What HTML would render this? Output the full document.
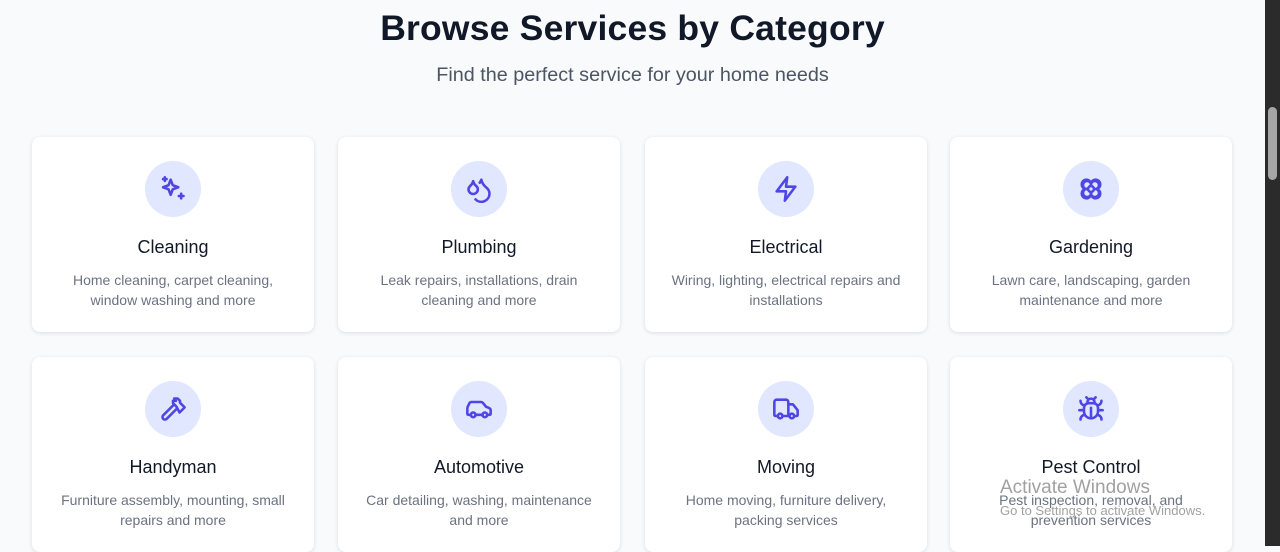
<!DOCTYPE html>
<html><head><meta charset="utf-8"><style>
*{box-sizing:border-box;margin:0;padding:0}
body{width:1280px;height:546px;overflow:hidden;background:#f8fafc;font-family:"Liberation Sans",sans-serif;position:relative}
h1{position:absolute;top:8px;left:0;width:1265px;text-align:center;font-size:35.5px;font-weight:bold;color:#111827;letter-spacing:0.2px}
.sub{position:absolute;top:64px;left:0;width:1265px;text-align:center;font-size:19.8px;color:#4b5563}
.card{position:absolute;width:282px;height:195px;background:#fff;border-radius:8px;box-shadow:0 1px 4px rgba(0,0,0,.12);text-align:center}
.ic{position:absolute;left:113px;top:24px;width:56px;height:56px;border-radius:50%;background:#e0e7ff;display:flex;align-items:center;justify-content:center}
.ic svg{width:28px;height:28px;fill:none;stroke:#4f46e5;stroke-width:2.2;stroke-linecap:round;stroke-linejoin:round}
.t{position:absolute;top:100px;width:100%;font-size:18px;color:#111827}
.d{position:absolute;top:133px;left:20px;right:20px;font-size:14px;line-height:20px;color:#6b7280}
.sb{position:absolute;left:1265px;top:0;width:15px;height:546px;background:#2b2b2b}
.th{position:absolute;left:1268px;top:107px;width:9px;height:73px;border-radius:5px;background:#a6a6a6}
.wm{position:absolute;left:1000px;top:477px;color:rgba(130,130,130,.75);font-size:19px}
.wm2{position:absolute;left:1000px;top:503px;color:rgba(130,130,130,.75);font-size:13px}
</style></head><body>
<h1>Browse Services by Category</h1>
<div class="sub">Find the perfect service for your home needs</div>

<div class="card" style="left:32px;top:137px"><div class="ic"><svg viewBox="0 0 24 24"><path d="M10 4l1.8 4.7L16.5 10.5l-4.7 1.8L10 17l-1.8-4.7L3.5 10.5l4.7-1.8z"/><path d="M19 16v4M17 18h4M5 2v3M3.5 3.5h3"/></svg></div><div class="t">Cleaning</div><div class="d">Home cleaning, carpet cleaning, window washing and more</div></div>
<div class="card" style="left:338px;top:137px"><div class="ic"><svg viewBox="0 0 24 24"><path d="M7 16.3c2.2 0 4-1.8 4-4 0-1.2-.6-2.3-1.8-3.3S7.3 6.6 7 5.3c-.3 1.3-1 2.6-2.2 3.7S3 11.1 3 12.3c0 2.2 1.8 4 4 4z"/><path d="M12.6 6.6A11 11 0 0 0 14 4c.5 2.5 2 4.9 4 6.5s3 3.5 3 5.5a7 7 0 0 1-12 4.9"/></svg></div><div class="t">Plumbing</div><div class="d">Leak repairs, installations, drain cleaning and more</div></div>
<div class="card" style="left:645px;top:137px"><div class="ic"><svg viewBox="0 0 24 24"><path d="M13 2L4 14h8l-1 8 9-12h-8z"/></svg></div><div class="t">Electrical</div><div class="d">Wiring, lighting, electrical repairs and installations</div></div>
<div class="card" style="left:950px;top:137px"><div class="ic"><svg viewBox="0 0 24 24"><circle cx="12" cy="12" r="2.5"/><path d="M12 9.5A3.5 3.5 0 1 0 9.5 12 3.5 3.5 0 1 0 12 14.5 3.5 3.5 0 1 0 14.5 12 3.5 3.5 0 1 0 12 9.5"/><path d="M12 7.5a4 4 0 1 1 4.5 4.5 4 4 0 1 1-4.5 4.5 4 4 0 1 1-4.5-4.5A4 4 0 1 1 12 7.5"/></svg></div><div class="t">Gardening</div><div class="d">Lawn care, landscaping, garden maintenance and more</div></div>

<div class="card" style="left:32px;top:357px"><div class="ic"><svg viewBox="0 0 24 24"><path d="M15 12l-8.4 8.4a2.1 2.1 0 0 1-3-3L12 9"/><path d="M17.6 15L22 10.6 18 6.6V5l-2-2h-3l1.5 2H12v2l3 3z"/></svg></div><div class="t">Handyman</div><div class="d">Furniture assembly, mounting, small repairs and more</div></div>
<div class="card" style="left:338px;top:357px"><div class="ic"><svg viewBox="0 0 24 24"><path d="M19 17h2c.6 0 1-.4 1-1v-3c0-.9-.7-1.7-1.5-1.9L18 10l-2.7-3.3A2 2 0 0 0 13.7 6H5.5a2 2 0 0 0-1.7 1L2.4 9.9A4 4 0 0 0 2 11.5V16c0 .6.4 1 1 1h2"/><circle cx="7" cy="17" r="2"/><path d="M9 17h6"/><circle cx="17" cy="17" r="2"/></svg></div><div class="t">Automotive</div><div class="d">Car detailing, washing, maintenance and more</div></div>
<div class="card" style="left:645px;top:357px"><div class="ic"><svg viewBox="0 0 24 24"><path d="M14 18V6a2 2 0 0 0-2-2H4a2 2 0 0 0-2 2v11a1 1 0 0 0 1 1h2M15 18H9M19 18h2a1 1 0 0 0 1-1v-3.6a1 1 0 0 0-.2-.6l-3.5-4.4A1 1 0 0 0 17.5 8H14"/><circle cx="17" cy="18" r="2"/><circle cx="7" cy="18" r="2"/></svg></div><div class="t">Moving</div><div class="d">Home moving, furniture delivery, packing services</div></div>
<div class="card" style="left:950px;top:357px"><div class="ic"><svg viewBox="0 0 24 24"><path d="M8 2l1.9 1.9M14.1 3.9L16 2M9 7.1v-1a3 3 0 1 1 6 0v1"/><path d="M12 20c-3.3 0-6-2.7-6-6v-3a4 4 0 0 1 4-4h4a4 4 0 0 1 4 4v3c0 3.3-2.7 6-6 6M12 20v-9M6.5 9C4.6 8.8 3 7.1 3 5M6 13H2M3 21c0-2.1 1.7-3.9 3.8-4M20.97 5c0 2.1-1.6 3.8-3.5 4M22 13h-4M17.2 17c2.1.1 3.8 1.9 3.8 4"/></svg></div><div class="t">Pest Control</div><div class="d">Pest inspection, removal, and prevention services</div></div>

<div class="wm">Activate Windows</div>
<div class="wm2">Go to Settings to activate Windows.</div>
<div class="sb"></div><div class="th"></div>
</body></html>
